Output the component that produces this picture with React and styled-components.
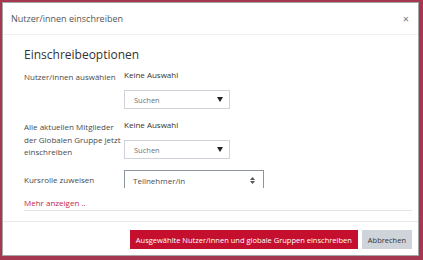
import React from "react";
import styled, { createGlobalStyle } from "styled-components";

const Global = createGlobalStyle`
  html, body { margin: 0; padding: 0; }
  body {
    background: #a53750;
    font-family: "Open Sans", "Noto Sans", sans-serif;
    color: #333;
    overflow: hidden;
  }
  * { box-sizing: border-box; }
`;

const Backdrop = styled.div`
  width: 423px;
  height: 260px;
  padding: 2px 4px 4px 2px;
  background: #a53750;
`;

const Modal = styled.div`
  height: 254px;
  background: #fff;
  border: 1px solid rgba(0, 0, 0, 0.35);
  display: flex;
  flex-direction: column;
`;

const Header = styled.div`
  height: 32px;
  flex: none;
  display: flex;
  align-items: center;
  justify-content: space-between;
  padding: 0 9px 0 8px;
  border-bottom: 1px solid #f0f0f0;
`;

const HeaderTitle = styled.div`
  font-size: 9px;
  color: #555;
`;

const Close = styled.span`
  font-size: 11px;
  color: #777;
  line-height: 1;
`;

const Body = styled.div`
  flex: 1;
  padding: 12px 6px 0 21px;
`;

const Fieldset = styled.div`
  border-bottom: 1px solid #e4e4e4;
  padding-bottom: 1px;
`;

const Legend = styled.div`
  font-size: 12px;
  line-height: 16px;
  color: #333;
  margin-bottom: 6px;
`;

const Row = styled.div`
  display: grid;
  grid-template-columns: 100px 1fr;
  margin-bottom: ${(p) => p.$gap ?? 9}px;
`;

const Label = styled.div`
  font-size: 8px;
  line-height: 12.5px;
  color: #4a4a4a;
  padding-top: ${(p) => p.$pt ?? 3}px;
`;

const Cell = styled.div`
  display: flex;
  flex-direction: column;
  align-items: flex-start;
`;

const Info = styled.div`
  font-size: 8px;
  line-height: 12px;
  color: #333;
  margin-bottom: 9px;
`;

const SearchBox = styled.div`
  width: 106px;
  height: 19px;
  border: 1px solid #ced4da;
  display: flex;
  align-items: center;
  justify-content: space-between;
  padding: 0 6px 0 9px;
  font-size: 7.5px;
  color: #6a737b;
`;

const Tri = styled.span`
  width: 0;
  height: 0;
  border-left: 3.5px solid transparent;
  border-right: 3.5px solid transparent;
  border-top: 5px solid #222;
`;

const RoleSelect = styled.div`
  width: 140px;
  height: 18px;
  border: 1px solid #8f959e;
  border-bottom: none;
  display: flex;
  align-items: center;
  justify-content: space-between;
  padding: 1px 8px 0 8px;
  font-size: 8px;
  color: #495057;
`;

const Updown = styled.svg`
  width: 5px;
  height: 7px;
`;

const MoreLink = styled.a`
  display: block;
  font-size: 8px;
  line-height: 12px;
  color: #c0263f;
  text-decoration: none;
`;

const Footer = styled.div`
  flex: none;
  border-top: 1px solid #e9e9e9;
  display: flex;
  justify-content: flex-end;
  gap: 4px;
  padding: 8px 6px 6px 0;
`;

const Button = styled.button`
  height: 19px;
  border: none;
  border-radius: 0;
  font-family: inherit;
  font-size: 7.5px;
  padding: 0 ${(p) => (p.$primary ? 6 : 6)}px;
  background: ${(p) => (p.$primary ? "#c4102e" : "#ced4da")};
  color: ${(p) => (p.$primary ? "#fff" : "#333")};
  white-space: nowrap;
`;

export default function App() {
  return (
    <>
      <Global />
      <Backdrop>
        <Modal>
          <Header>
            <HeaderTitle>Nutzer/innen einschreiben</HeaderTitle>
            <Close>×</Close>
          </Header>
          <Body>
            <Fieldset>
              <Legend>Einschreibeoptionen</Legend>
              <Row $gap={10}>
                <Label $pt={2}>Nutzer/innen auswählen</Label>
                <Cell>
                  <Info>Keine Auswahl</Info>
                  <SearchBox>
                    Suchen
                    <Tri />
                  </SearchBox>
                </Cell>
              </Row>
              <Row $gap={11}>
                <Label $pt={2}>
                  Alle aktuellen Mitglieder
                  <br />
                  der Globalen Gruppe jetzt
                  <br />
                  einschreiben
                </Label>
                <Cell>
                  <Info>Keine Auswahl</Info>
                  <SearchBox>
                    Suchen
                    <Tri />
                  </SearchBox>
                </Cell>
              </Row>
              <Row $gap={9}>
                <Label $pt={4}>Kursrolle zuweisen</Label>
                <Cell>
                  <RoleSelect>
                    Teilnehmer/in
                    <Updown viewBox="0 0 5 7">
                      <path d="M2.5 0 L5 3 L0 3 Z M0 4 L5 4 L2.5 7 Z" fill="#555" />
                    </Updown>
                  </RoleSelect>
                </Cell>
              </Row>
              <MoreLink href="#">Mehr anzeigen ..</MoreLink>
            </Fieldset>
          </Body>
          <Footer>
            <Button $primary>Ausgewählte Nutzer/innen und globale Gruppen einschreiben</Button>
            <Button>Abbrechen</Button>
          </Footer>
        </Modal>
      </Backdrop>
    </>
  );
}
